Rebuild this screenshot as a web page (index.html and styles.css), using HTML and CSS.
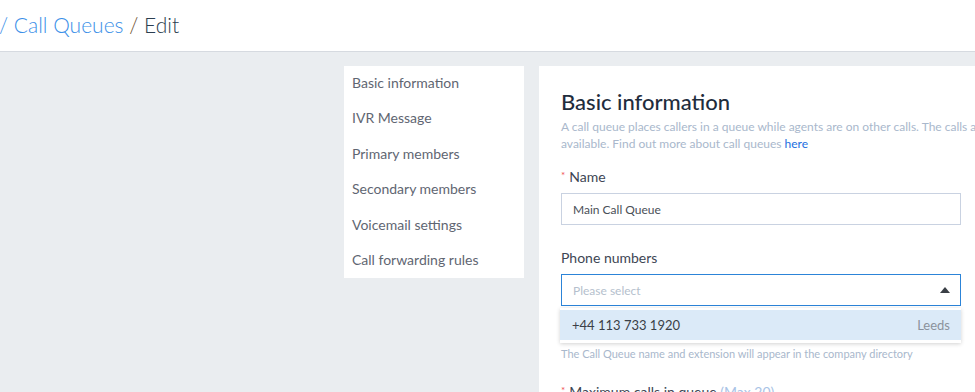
FILE: index.html
```html
<!DOCTYPE html>
<html>
<head>
<meta charset="utf-8">
<link rel="stylesheet" href="styles.css">
</head>
<body>
<header class="topbar">
  <div class="crumbs"><span class="crumb-link">/ Call Queues</span> <span class="crumb-sep">/</span> <span class="crumb-cur">Edit</span></div>
</header>
<div class="page">
  <nav class="side">
    <div class="side-item">Basic information</div>
    <div class="side-item">IVR Message</div>
    <div class="side-item">Primary members</div>
    <div class="side-item">Secondary members</div>
    <div class="side-item">Voicemail settings</div>
    <div class="side-item">Call forwarding rules</div>
  </nav>
  <main class="card">
    <h2 class="title">Basic information</h2>
    <p class="desc">A call queue places callers in a queue while agents are on other calls. The calls are answered in order as soon as an agent is<br>available. Find out more about call queues <a class="link">here</a></p>
    <div class="field">
      <label class="label"><span class="req">*</span>Name</label>
      <div class="input">Main Call Queue</div>
    </div>
    <div class="field">
      <label class="label">Phone numbers</label>
      <div class="select-wrap">
        <div class="input select"><span class="ph">Please select</span><span class="caret"></span></div>
        <div class="dropdown">
          <div class="opt"><span>+44 113 733 1920</span><span class="opt-loc">Leeds</span></div>
        </div>
      </div>
      <p class="hint hidden-line">Select the phone numbers that will ring this call queue when dialled</p>
      <p class="hint">The Call Queue name and extension will appear in the company directory</p>
    </div>
    <div class="field field-max">
      <label class="label"><span class="req">*</span>Maximum calls in queue <span class="max">(Max 20)</span></label>
    </div>
  </main>
</div>
</body>
</html>
```
FILE: styles.css
```css
html, body { margin: 0; padding: 0; }
body {
  background: #eaedf0;
  font-family: Lato, "Noto Sans", sans-serif;
  overflow: hidden;
  width: 975px;
  height: 392px;
}
.topbar {
  height: 51px;
  background: #fff;
  border-bottom: 1px solid #d6dae0;
  display: flex;
  align-items: center;
}
.crumbs {
  font-size: 21px;
  font-weight: 300;
  color: #2c3e50;
  margin-left: -1px;
  padding-bottom: 2px;
}
.crumb-link { color: #3b8fe8; }
.crumb-sep { color: #6b4c2a; }
.page {
  display: flex;
  gap: 15px;
  padding: 14px 0 0 344px;
  align-items: flex-start;
}
.side {
  width: 180px;
  background: #fff;
  padding: 3px 0 0;
  height: 209px;
  flex: none;
}
.side-item {
  font-size: 14px;
  color: #5f6672;
  padding-left: 8px;
  height: 35.4px;
  line-height: 28px;
}
.card {
  background: #fff;
  width: 640px;
  flex: none;
  padding: 22px 22px 40px;
  height: 400px;
  box-sizing: border-box;
}
.title {
  margin: 0;
  font-size: 22px;
  font-weight: 500;
  color: #1f2d3d;
  line-height: 28px;
}
.desc {
  margin: 2px 0 0;
  font-size: 12px;
  line-height: 17px;
  color: #a9b8cc;
  white-space: nowrap;
}
.link { color: #1b6ee0; }
.field { width: 400px; margin-top: 14px; }
.field + .field { margin-top: 24px; }
.field + .field-max { margin-top: 19px; }
.label {
  display: block;
  font-size: 14px;
  color: #3d4654;
  line-height: 18px;
  margin-bottom: 7px;
}
.req {
  color: #f05252;
  font-size: 10px;
  margin-right: 4px;
  vertical-align: 3px;
}
.max { color: #a9c3e6; }
.input {
  height: 32px;
  border: 1px solid #c9d2e1;
  box-sizing: border-box;
  font-size: 12px;
  color: #4a4f57;
  padding: 0 11px;
  display: flex;
  align-items: center;
}
.select-wrap { position: relative; }
.select { border-color: #2c84d8; justify-content: space-between; padding-right: 10px; }
.ph { color: #b5bfcd; }
.caret {
  width: 0; height: 0;
  border-left: 5px solid transparent;
  border-right: 5px solid transparent;
  border-bottom: 6px solid #3a3f46;
}
.dropdown {
  position: absolute;
  left: -1px;
  right: 0;
  top: 34px;
  background: #fff;
  padding: 2px 0 3px;
  box-shadow: 0 1px 4px rgba(0,0,0,0.18);
  z-index: 2;
}
.opt {
  height: 30px;
  background: #dbeaf8;
  display: flex;
  justify-content: space-between;
  align-items: center;
  padding: 0 11px 0 12px;
  font-size: 13px;
  color: #3a3f47;
}
.opt-loc { color: #8b929c; }
.hint {
  margin: 0;
  font-size: 11px;
  line-height: 17px;
  color: #a9b8cc;
  white-space: nowrap;
}
.hidden-line { margin-top: 22px; }
```
